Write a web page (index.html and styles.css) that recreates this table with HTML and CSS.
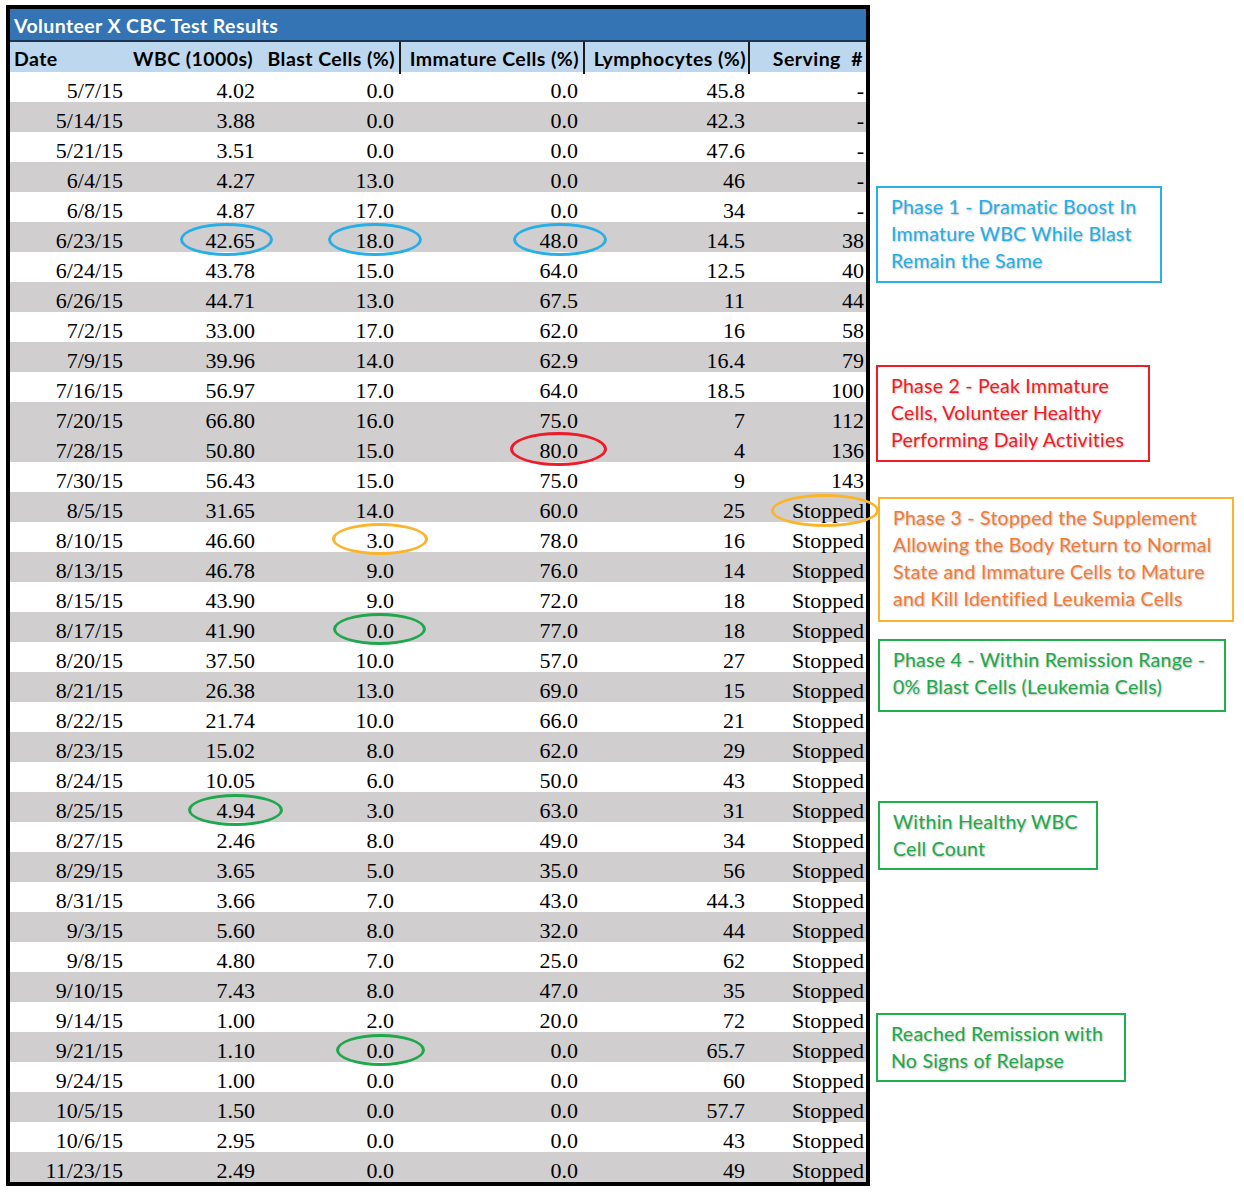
FILE: index.html
```html
<!DOCTYPE html>
<html>
<head>
<meta charset="utf-8">
<link rel="stylesheet" href="styles.css">
</head>
<body>
<div class="page">
  <div class="sheet">
    <div class="title">Volunteer X CBC Test Results</div>
    <div class="hdr">
      <div class="h h1">Date</div>
      <div class="h h2">WBC (1000s)</div>
      <div class="h h3">Blast Cells (%)</div>
      <div class="h h4 sep">Immature Cells (%)</div>
      <div class="h h5 sep">Lymphocytes (%)</div>
      <div class="h h6 sep">Serving&nbsp;&nbsp;#</div>
    </div>
    <div class="row"><div>5/7/15</div><div>4.02</div><div>0.0</div><div>0.0</div><div>45.8</div><div>-</div></div>
    <div class="row g"><div>5/14/15</div><div>3.88</div><div>0.0</div><div>0.0</div><div>42.3</div><div>-</div></div>
    <div class="row"><div>5/21/15</div><div>3.51</div><div>0.0</div><div>0.0</div><div>47.6</div><div>-</div></div>
    <div class="row g"><div>6/4/15</div><div>4.27</div><div>13.0</div><div>0.0</div><div>46</div><div>-</div></div>
    <div class="row"><div>6/8/15</div><div>4.87</div><div>17.0</div><div>0.0</div><div>34</div><div>-</div></div>
    <div class="row g"><div>6/23/15</div><div>42.65</div><div>18.0</div><div>48.0</div><div>14.5</div><div>38</div></div>
    <div class="row"><div>6/24/15</div><div>43.78</div><div>15.0</div><div>64.0</div><div>12.5</div><div>40</div></div>
    <div class="row g"><div>6/26/15</div><div>44.71</div><div>13.0</div><div>67.5</div><div>11</div><div>44</div></div>
    <div class="row"><div>7/2/15</div><div>33.00</div><div>17.0</div><div>62.0</div><div>16</div><div>58</div></div>
    <div class="row g"><div>7/9/15</div><div>39.96</div><div>14.0</div><div>62.9</div><div>16.4</div><div>79</div></div>
    <div class="row"><div>7/16/15</div><div>56.97</div><div>17.0</div><div>64.0</div><div>18.5</div><div>100</div></div>
    <div class="row g"><div>7/20/15</div><div>66.80</div><div>16.0</div><div>75.0</div><div>7</div><div>112</div></div>
    <div class="row g"><div>7/28/15</div><div>50.80</div><div>15.0</div><div>80.0</div><div>4</div><div>136</div></div>
    <div class="row"><div>7/30/15</div><div>56.43</div><div>15.0</div><div>75.0</div><div>9</div><div>143</div></div>
    <div class="row g"><div>8/5/15</div><div>31.65</div><div>14.0</div><div>60.0</div><div>25</div><div>Stopped</div></div>
    <div class="row"><div>8/10/15</div><div>46.60</div><div>3.0</div><div>78.0</div><div>16</div><div>Stopped</div></div>
    <div class="row g"><div>8/13/15</div><div>46.78</div><div>9.0</div><div>76.0</div><div>14</div><div>Stopped</div></div>
    <div class="row"><div>8/15/15</div><div>43.90</div><div>9.0</div><div>72.0</div><div>18</div><div>Stopped</div></div>
    <div class="row g"><div>8/17/15</div><div>41.90</div><div>0.0</div><div>77.0</div><div>18</div><div>Stopped</div></div>
    <div class="row"><div>8/20/15</div><div>37.50</div><div>10.0</div><div>57.0</div><div>27</div><div>Stopped</div></div>
    <div class="row g"><div>8/21/15</div><div>26.38</div><div>13.0</div><div>69.0</div><div>15</div><div>Stopped</div></div>
    <div class="row"><div>8/22/15</div><div>21.74</div><div>10.0</div><div>66.0</div><div>21</div><div>Stopped</div></div>
    <div class="row g"><div>8/23/15</div><div>15.02</div><div>8.0</div><div>62.0</div><div>29</div><div>Stopped</div></div>
    <div class="row"><div>8/24/15</div><div>10.05</div><div>6.0</div><div>50.0</div><div>43</div><div>Stopped</div></div>
    <div class="row g"><div>8/25/15</div><div>4.94</div><div>3.0</div><div>63.0</div><div>31</div><div>Stopped</div></div>
    <div class="row"><div>8/27/15</div><div>2.46</div><div>8.0</div><div>49.0</div><div>34</div><div>Stopped</div></div>
    <div class="row g"><div>8/29/15</div><div>3.65</div><div>5.0</div><div>35.0</div><div>56</div><div>Stopped</div></div>
    <div class="row"><div>8/31/15</div><div>3.66</div><div>7.0</div><div>43.0</div><div>44.3</div><div>Stopped</div></div>
    <div class="row g"><div>9/3/15</div><div>5.60</div><div>8.0</div><div>32.0</div><div>44</div><div>Stopped</div></div>
    <div class="row"><div>9/8/15</div><div>4.80</div><div>7.0</div><div>25.0</div><div>62</div><div>Stopped</div></div>
    <div class="row g"><div>9/10/15</div><div>7.43</div><div>8.0</div><div>47.0</div><div>35</div><div>Stopped</div></div>
    <div class="row"><div>9/14/15</div><div>1.00</div><div>2.0</div><div>20.0</div><div>72</div><div>Stopped</div></div>
    <div class="row g"><div>9/21/15</div><div>1.10</div><div>0.0</div><div>0.0</div><div>65.7</div><div>Stopped</div></div>
    <div class="row"><div>9/24/15</div><div>1.00</div><div>0.0</div><div>0.0</div><div>60</div><div>Stopped</div></div>
    <div class="row g"><div>10/5/15</div><div>1.50</div><div>0.0</div><div>0.0</div><div>57.7</div><div>Stopped</div></div>
    <div class="row"><div>10/6/15</div><div>2.95</div><div>0.0</div><div>0.0</div><div>43</div><div>Stopped</div></div>
    <div class="row g"><div>11/23/15</div><div>2.49</div><div>0.0</div><div>0.0</div><div>49</div><div>Stopped</div></div>

    <div class="ring blue e1"></div>
    <div class="ring blue e2"></div>
    <div class="ring blue e3"></div>
    <div class="ring red e4"></div>
    <div class="ring orange e5"></div>
    <div class="ring orange e6"></div>
    <div class="ring green e7"></div>
    <div class="ring green e8"></div>
    <div class="ring green e9"></div>
  </div>

  <div class="notes">
    <div class="note n-blue">Phase 1 - Dramatic Boost In<br>Immature WBC While Blast<br>Remain the Same</div>
    <div class="note n-red">Phase 2 - Peak Immature<br>Cells, Volunteer Healthy<br>Performing Daily Activities</div>
    <div class="note n-orange">Phase 3 - Stopped the Supplement<br>Allowing the Body Return to Normal<br>State and Immature Cells to Mature<br>and Kill Identified Leukemia Cells</div>
    <div class="note n-green n4">Phase 4 - Within Remission Range -<br>0% Blast Cells (Leukemia Cells)</div>
    <div class="note n-green n5">Within Healthy WBC<br>Cell Count</div>
    <div class="note n-green n6">Reached Remission with<br>No Signs of Relapse</div>
  </div>
</div>
</body>
</html>
```

FILE: styles.css
```css
html, body {
  margin: 0;
  padding: 0;
  background: #ffffff;
}

.page {
  display: flex;
  align-items: flex-start;
  width: 1244px;
  height: 1194px;
}

.sheet {
  position: relative;
  margin: 5px 0 0 6px;
  width: 856px;
  border: 4px solid #000000;
  background: #ffffff;
}

.title {
  background: #3474b4;
  color: #ffffff;
  font-family: Lato, "Liberation Sans", sans-serif;
  font-weight: 700;
  font-size: 19.5px;
  letter-spacing: 0.4px;
  line-height: 31px;
  padding: 1px 0 0 4px;
  box-sizing: border-box;
  height: 33px;
  border-bottom: 2px solid #1d3550;
}

.hdr {
  display: grid;
  grid-template-columns: 120px 132px 137px 184px 165px 118px;
  height: 30px;
  background: #bdd7ee;
  font-family: Lato, "Liberation Sans", sans-serif;
  font-weight: 700;
  font-size: 19.5px;
  letter-spacing: 0.45px;
  color: #000000;
}

.h {
  line-height: 30px;
  padding-top: 2px;
  white-space: nowrap;
  text-align: right;
  box-sizing: border-box;
}

.h1 { text-align: left; padding-left: 4px; }
.h2 { padding-right: 9px; }
.h3 { padding-right: 4px; }
.h4 { padding-right: 4px; }
.h5 { padding-right: 2px; }
.h6 { padding-right: 3px; }

.sep { border-left: 2px solid #1a1a1a; }

.row {
  display: grid;
  grid-template-columns: 120px 132px 137px 184px 165px 118px;
  height: 30px;
  font-family: "Liberation Serif", "Times New Roman", serif;
  font-size: 22px;
  color: #000000;
}

.row.g { background: #d0cecf; }

.row > div {
  text-align: right;
  white-space: nowrap;
  line-height: 22px;
  padding-top: 8px;
  box-sizing: border-box;
  height: 30px;
}

.row > div:nth-child(1) { padding-right: 7px; }
.row > div:nth-child(2) { padding-right: 7px; }
.row > div:nth-child(3) { padding-right: 5px; }
.row > div:nth-child(4) { padding-right: 5px; }
.row > div:nth-child(5) { padding-right: 3px; }
.row > div:nth-child(6) { padding-right: 2px; }

.ring {
  position: absolute;
  box-sizing: border-box;
  border: 3px solid;
  border-radius: 50%;
  z-index: 2;
}

.blue { border-color: #27aee6; }
.red { border-color: #ee1b2b; }
.orange { border-color: #fbb52d; }
.green { border-color: #1ea74c; }

.e1 { left: 170px; top: 214px; width: 93px; height: 33px; }
.e2 { left: 318px; top: 214px; width: 94px; height: 33px; }
.e3 { left: 503px; top: 214px; width: 94px; height: 33px; }
.e4 { left: 500px; top: 423px; width: 97px; height: 34px; }
.e5 { left: 761px; top: 485px; width: 108px; height: 33px; }
.e6 { left: 322px; top: 514px; width: 96px; height: 32px; }
.e7 { left: 323px; top: 604px; width: 93px; height: 32px; }
.e8 { left: 178px; top: 785px; width: 95px; height: 32px; }
.e9 { left: 326px; top: 1025px; width: 89px; height: 32px; }

.notes {
  display: flex;
  flex-direction: column;
  align-items: flex-start;
}

.note {
  box-sizing: border-box;
  border: 2px solid;
  font-family: Lato, "Liberation Sans", sans-serif;
  font-size: 19.5px;
  letter-spacing: 0.25px;
  line-height: 27px;
  white-space: nowrap;
  padding: 5px 0 0 13px;
  text-shadow: 1px 1px 2px rgba(0, 0, 0, 0.28);
}

.n-blue {
  margin: 186px 0 0 6px;
  width: 286px;
  height: 97px;
  color: #1fb0e6;
  border-color: #27b1e6;
}

.n-red {
  margin: 82px 0 0 6px;
  width: 274px;
  height: 97px;
  color: #ee1c25;
  border-color: #ee1c25;
}

.n-orange {
  margin: 35px 0 0 8px;
  width: 356px;
  height: 125px;
  color: #f07b36;
  border-color: #fbb32e;
}

.n-green {
  color: #1ea94b;
  border-color: #1faf4c;
}

.n4 {
  margin: 17px 0 0 8px;
  width: 348px;
  height: 73px;
}

.n5 {
  margin: 89px 0 0 8px;
  width: 220px;
  height: 69px;
}

.n6 {
  margin: 143px 0 0 6px;
  width: 250px;
  height: 69px;
}
```
